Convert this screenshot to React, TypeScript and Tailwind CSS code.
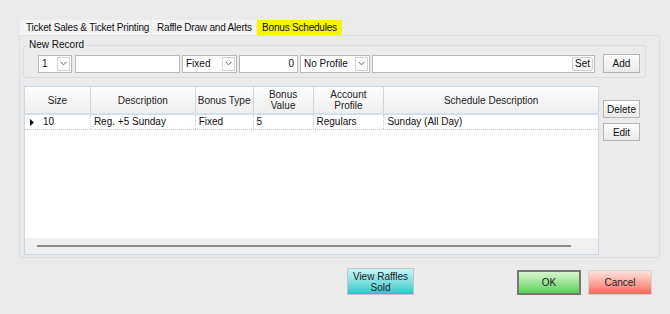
const columns = [
  { label: "Description", w: "w-[105px]" },
  { label: "Bonus Type", w: "w-[58px]" },
  { label: "Bonus\nValue", w: "w-[60px]" },
  { label: "Account\nProfile", w: "w-[71px]" },
  { label: "Schedule Description", w: "w-[214px]" },
];

const rows = [
  { size: "10", description: "Reg. +5 Sunday", type: "Fixed", value: "5", profile: "Regulars", schedule: "Sunday (All Day)" },
];

function Chevron() {
  return (
    <svg width="7" height="5" viewBox="0 0 7 5" className="text-[#666]">
      <path d="M0.5 0.8 L3.5 3.8 L6.5 0.8" fill="none" stroke="currentColor" strokeWidth="1" />
    </svg>
  );
}

function Select({ value, w }: { value: string; w: string }) {
  return (
    <div className={`${w} h-[18px] bg-white border border-[#b9b9b9] flex items-center`}>
      <span className="flex-1 pl-[3px] truncate">{value}</span>
      <span className="w-[13px] h-[14px] mr-[1px] border border-[#d4d4d4] bg-[#fdfdfd] flex items-center justify-center">
        <Chevron />
      </span>
    </div>
  );
}

function SmallButton({ label, w = "w-[37px]", h = "h-[18px]" }: { label: string; w?: string; h?: string }) {
  return (
    <div className={`${w} ${h} border border-[#b6b6b6] bg-gradient-to-b from-[#fefefe] to-[#e9e9e9] flex items-center justify-center text-[#111]`}>
      {label}
    </div>
  );
}

export default function App() {
  return (
    <div className="w-[670px] h-[314px] bg-[#ebebeb] font-['Liberation_Sans',Arial,sans-serif] text-[10px] text-[#111] overflow-hidden pt-[20px]">
      {/* tabs */}
      <div className="flex ml-[20px] h-[15px] gap-[1px] whitespace-nowrap tracking-[-0.2px]">
        <div className="w-[131px] bg-[#f4f4f4] flex items-center pl-[6px]">Ticket Sales &amp; Ticket Printing</div>
        <div className="w-[104px] bg-[#f4f4f4] flex items-center pl-[5px]">Raffle Draw and Alerts</div>
        <div className="w-[85px] bg-[#f5f500] flex items-center justify-center">Bonus Schedules</div>
      </div>

      {/* tab panel */}
      <div className="ml-[19px] w-[641px] h-[223px] border border-[#dadfe4] pt-[9px] whitespace-nowrap">
        <div className="relative ml-[3px] w-[623px] h-[33px] border border-[#d6dce2] rounded-[3px] pl-[14px] pt-[8px]">
          <span className="absolute -top-[7px] left-[4px] bg-[#ebebeb] px-[1px] leading-[12px]">New Record</span>
          <div className="flex items-center">
            <Select value="1" w="w-[34px]" />
            <div className="ml-[3px] w-[105px] h-[18px] bg-white border border-[#b9b9b9]" />
            <div className="ml-[2px]"><Select value="Fixed" w="w-[55px]" /></div>
            <div className="ml-[2px] w-[59px] h-[18px] bg-white border border-[#b9b9b9] flex items-center justify-end pr-[3px]">0</div>
            <div className="ml-[2px]"><Select value="No Profile" w="w-[70px]" /></div>
            <div className="ml-[2px] w-[223px] h-[18px] bg-white border border-[#b9b9b9] flex items-center justify-end pr-[1px]">
              <span className="h-[14px] px-[2px] border border-[#cfcfcf] rounded-[2px] bg-[#f6f6f6] flex items-center">Set</span>
            </div>
            <div className="ml-[8px]"><SmallButton label="Add" h="h-[19px]" /></div>
          </div>
        </div>

        <div className="flex mt-[8px] ml-[4px]">
          {/* grid */}
          <div className="w-[575px] h-[169px] border border-[#c9d9ea] bg-white flex flex-col">
            <div className="flex h-[28px] border-b-2 border-[#d3e0ec] bg-gradient-to-b from-[#fdfdfd] to-[#efefef] text-[#222] leading-[11px]">
              <div className="w-[66px] flex items-center justify-center border-r border-[#cfd6dd]">Size</div>
              {columns.map((c, i) => (
                <div
                  key={c.label}
                  className={`${c.w} flex items-center justify-center text-center whitespace-pre-line ${i < columns.length - 1 ? "border-r border-[#cfd6dd]" : ""}`}
                >
                  {c.label}
                </div>
              ))}
            </div>
            {rows.map(r => (
              <div key={r.size} className="flex h-[15px] border-b border-dotted border-[#c8c8c8] leading-[14px]">
                <div className="w-[15px] flex items-center justify-center">
                  <svg width="4" height="7" viewBox="0 0 4 7"><path d="M0 0 L4 3.5 L0 7 Z" fill="#111" /></svg>
                </div>
                <div className="w-[51px] pl-[3px] border-r border-dotted border-[#c8c8c8]">{r.size}</div>
                <div className="w-[105px] pl-[3px] border-r border-dotted border-[#c8c8c8]">{r.description}</div>
                <div className="w-[58px] pl-[3px] border-r border-dotted border-[#c8c8c8]">{r.type}</div>
                <div className="w-[60px] pl-[3px] border-r border-dotted border-[#c8c8c8]">{r.value}</div>
                <div className="w-[71px] pl-[3px] border-r border-dotted border-[#c8c8c8]">{r.profile}</div>
                <div className="w-[214px] pl-[3px]">{r.schedule}</div>
              </div>
            ))}
            <div className="flex-1" />
            <div className="h-[16px] bg-[#f0f0f0] flex items-center pl-[12px]">
              <div className="w-[534px] h-[2px] bg-[#8a8a8a]" />
            </div>
          </div>

          {/* side buttons */}
          <div className="ml-[4px] pt-[14px] flex flex-col gap-[5px]">
            <SmallButton label="Delete" h="h-[18px]" />
            <SmallButton label="Edit" h="h-[18px]" />
          </div>
        </div>
      </div>

      {/* bottom buttons */}
      <div className="flex items-start mt-[10px]">
        <div className="ml-[347px] w-[67px] h-[27px] border border-[#c4c4c4] bg-gradient-to-b from-[#c4f8f8] to-[#1fc6c8] flex flex-col items-center justify-center leading-[11px] text-[#222]">
          <span>View Raffles</span>
          <span>Sold</span>
        </div>
        <div className="ml-[103px] mt-[2px] w-[64px] h-[25px] border-2 border-[#767676] bg-gradient-to-b from-[#d6f7cf] to-[#56cf55] flex items-center justify-center text-[#222]">
          OK
        </div>
        <div className="ml-[7px] mt-[2px] w-[64px] h-[25px] border border-[#d2d2d2] bg-gradient-to-b from-[#ffe2dc] to-[#f06a5b] flex items-center justify-center text-[#222]">
          Cancel
        </div>
      </div>
    </div>
  );
}
